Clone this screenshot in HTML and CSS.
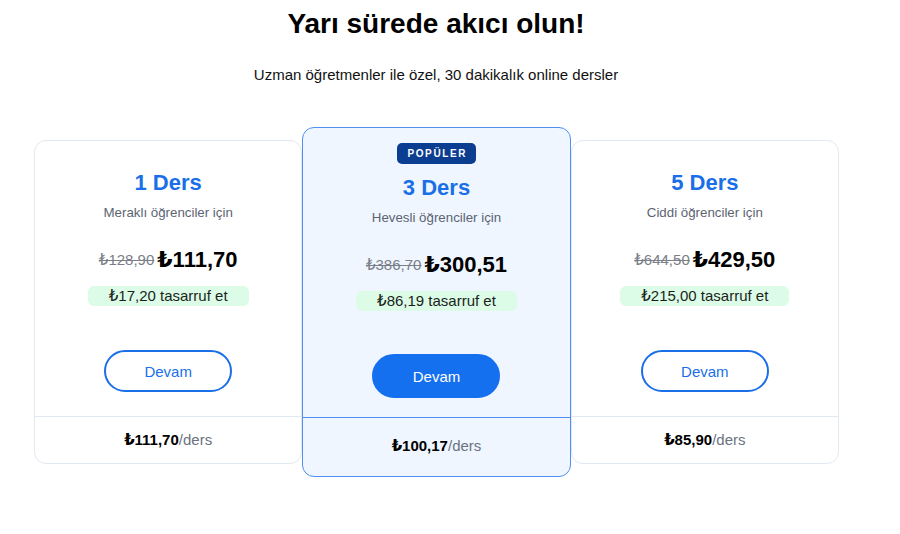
FILE: index.html
```html
<!DOCTYPE html>
<html lang="tr">
<head>
<meta charset="utf-8">
<title>Fiyatlandırma</title>
<link rel="stylesheet" href="styles.css">
</head>
<body>
<main class="page">
  <h1 class="title">Yarı sürede akıcı olun!</h1>
  <p class="lead">Uzman öğretmenler ile özel, 30 dakikalık online dersler</p>
  <div class="plans">
    <section class="card">
      <div class="card-body">
        <h2 class="plan-name">1 Ders</h2>
        <p class="plan-desc">Meraklı öğrenciler için</p>
        <div class="price-row">
          <span class="old-price">₺128,90</span>
          <span class="price">₺111,70</span>
        </div>
        <span class="saving">₺17,20 tasarruf et</span>
        <button class="btn btn-outline">Devam</button>
      </div>
      <div class="card-foot"><b>₺111,70</b><span class="per">/ders</span></div>
    </section>
    <section class="card card-featured">
      <div class="card-body">
        <span class="badge">POPÜLER</span>
        <h2 class="plan-name">3 Ders</h2>
        <p class="plan-desc">Hevesli öğrenciler için</p>
        <div class="price-row">
          <span class="old-price">₺386,70</span>
          <span class="price">₺300,51</span>
        </div>
        <span class="saving">₺86,19 tasarruf et</span>
        <button class="btn btn-solid">Devam</button>
      </div>
      <div class="card-foot"><b>₺100,17</b><span class="per">/ders</span></div>
    </section>
    <section class="card">
      <div class="card-body">
        <h2 class="plan-name">5 Ders</h2>
        <p class="plan-desc">Ciddi öğrenciler için</p>
        <div class="price-row">
          <span class="old-price">₺644,50</span>
          <span class="price">₺429,50</span>
        </div>
        <span class="saving">₺215,00 tasarruf et</span>
        <button class="btn btn-outline">Devam</button>
      </div>
      <div class="card-foot"><b>₺85,90</b><span class="per">/ders</span></div>
    </section>
  </div>
</main>
</body>
</html>
```
FILE: styles.css
```css
* { box-sizing: border-box; }
html, body { margin: 0; padding: 0; background: #ffffff; }
body {
  font-family: "Liberation Sans", Arial, "DejaVu Sans", sans-serif;
  color: #111111;
}
.page {
  width: 872px;
  padding-top: 8px;
  text-align: center;
}
.title {
  margin: 0;
  font-size: 28px;
  line-height: 32px;
  font-weight: 700;
  color: #000;
}
.lead {
  margin: 26px 0 0;
  font-size: 15px;
  line-height: 18px;
  color: #111;
}
.plans {
  margin-top: 43px;
  padding: 0 33px 0 34px;
  display: flex;
  align-items: center;
}
.card {
  flex: 1 1 0;
  min-width: 0;
  background: #ffffff;
  border: 1px solid #e2e8f0;
  border-radius: 12px;
  display: flex;
  flex-direction: column;
}
.card-featured {
  position: relative;
  z-index: 1;
  background: #eff6ff;
  border-color: #4f8ff0;
}
.card-body {
  display: flex;
  flex-direction: column;
  align-items: center;
  padding: 29px 16px 24px;
}
.card-featured .card-body { padding: 15px 16px 19px; }
.badge {
  display: inline-block;
  height: 21px;
  padding: 4px 9px 0 10.5px;
  background: #0b3d91;
  color: #ffffff;
  border-radius: 5px;
  font-size: 10px;
  line-height: 13px;
  font-weight: 700;
  letter-spacing: 1.6px;
  margin-bottom: 11px;
}
.plan-name {
  margin: 0;
  font-size: 22px;
  line-height: 26px;
  font-weight: 700;
  color: #1a6fe8;
}
.plan-desc {
  margin: 8px 0 0;
  font-size: 13.3px;
  line-height: 18px;
  color: #5b6472;
}
.price-row {
  margin-top: 24px;
  height: 28px;
  display: flex;
  align-items: center;
  gap: 3px;
}
.old-price {
  font-size: 15px;
  line-height: 18px;
  color: #7a7f87;
  text-decoration: line-through;
}
.price {
  font-size: 22px;
  line-height: 28px;
  font-weight: 700;
  color: #000;
}
.saving {
  margin-top: 12px;
  display: inline-block;
  height: 20px;
  padding: 0 21px;
  background: #dcfce7;
  border-radius: 6px;
  font-size: 15px;
  line-height: 20px;
  color: #1b1f1c;
}
.btn {
  width: 128px;
  height: 42px;
  margin-top: 44px;
  border-radius: 22px;
  font-family: inherit;
  font-size: 15px;
  cursor: pointer;
}
.btn-outline {
  background: #ffffff;
  border: 2px solid #1a6fe8;
  color: #1a6fe8;
}
.btn-solid {
  height: 44px;
  margin-top: 43px;
  background: #1570ef;
  border: 2px solid #1570ef;
  color: #ffffff;
}
.card-foot {
  border-top: 1px solid #e2e8f0;
  padding: 14px 0;
  font-size: 15px;
  line-height: 18px;
  color: #000;
}
.card-featured .card-foot {
  border-top-color: #4f8ff0;
  padding: 19px 0 21px;
}
.card-foot b { font-weight: 700; }
.per { color: #6b7280; }
```
